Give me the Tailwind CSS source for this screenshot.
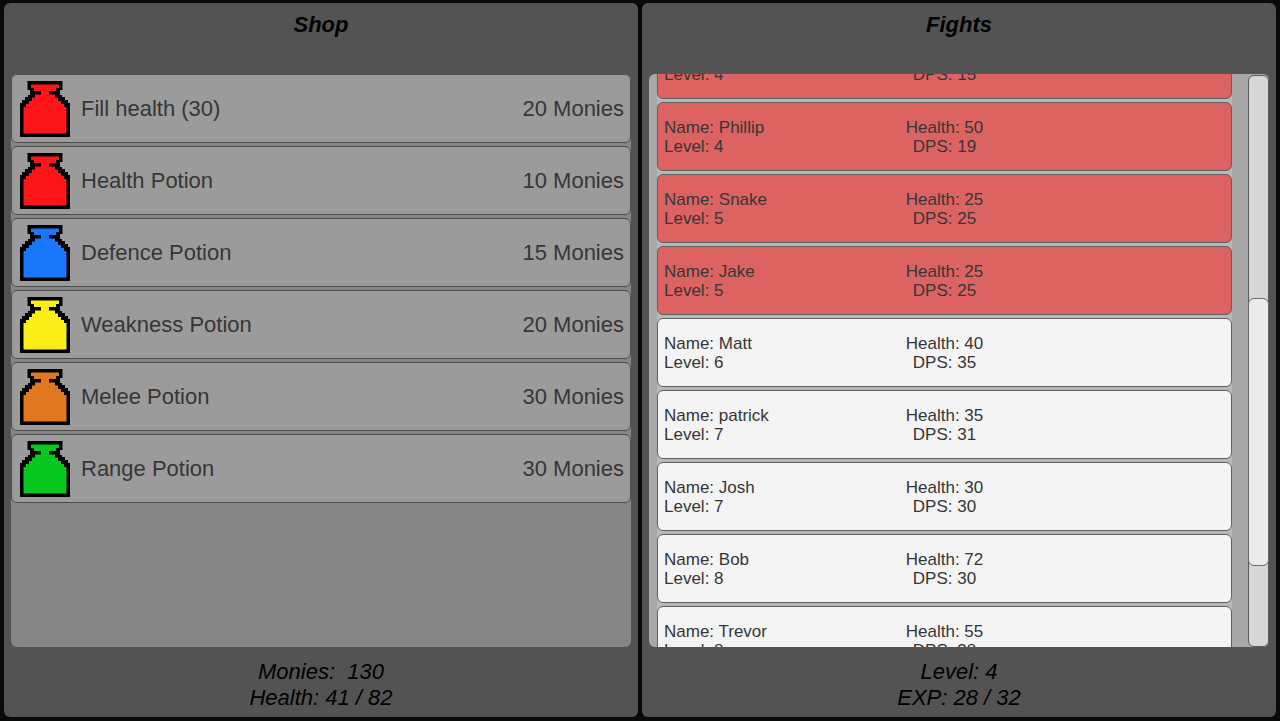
<!DOCTYPE html>
<html lang="en">
<head>
  <meta charset="UTF-8" />
  <meta name="viewport" content="width=device-width, initial-scale=1.0"/>
  <title>Shop & Fights</title>
  <script src="https://cdn.jsdelivr.net/npm/@tailwindcss/browser@4"></script>
</head>
<body class="h-screen bg-[#080b09] font-['Liberation_Sans',Arial,sans-serif] text-[#363636]">
  <!-- Potion bottle, filled with the current text colour -->
  <svg class="hidden">
    <symbol id="potion" viewBox="0 0 50 56">
      <path fill="#000" d="M7.5 0H42.5V9H40V14H42V16H45V19H48V22H50V56H0V22H2V19H5V16H8V14H10V9H7.5Z"/>
      <path fill="currentColor" d="M11 3.5H39V7H36V10H29V13.5H35V16.5H38V20H41V23H44V26H46.5V52.5H3.5V26H6V23H9V20H12V16.5H15V13.5H21V10H14V7H11Z"/>
    </symbol>
  </svg>

  <div class="h-full flex gap-1 px-1 pt-[3px] pb-1">
    <!-- Shop -->
    <section class="flex-1 min-w-0 flex flex-col rounded-md bg-[#535353] px-[7px]">
      <h2 class="h-[71px] shrink-0 pt-2 text-center text-[22px] leading-7 font-bold italic text-black">Shop</h2>
      <div id="shop-list" class="flex-1 min-h-0 overflow-hidden flex flex-col gap-[3px] rounded-md bg-[#868686]"></div>
      <div class="h-[70px] shrink-0 pt-3 text-center text-[22px] leading-[26px] italic text-black">
        <p class="whitespace-pre">Monies:  130</p>
        <p>Health: 41 / 82</p>
      </div>
    </section>

    <!-- Fights -->
    <section class="flex-1 min-w-0 flex flex-col rounded-md bg-[#535353] px-[7px]">
      <h2 class="h-[71px] shrink-0 pt-2 text-center text-[22px] leading-7 font-bold italic text-black">Fights</h2>
      <div class="flex-1 min-h-0 flex gap-4 rounded-md bg-[#a8a8a8] pl-2">
        <div class="flex-1 min-w-0 overflow-hidden bg-[#b8b8b8]">
          <div id="fight-list" class="-mt-11 flex flex-col gap-[3px]"></div>
        </div>
        <!-- Scrollbar -->
        <div class="relative w-[21px] mt-px rounded-md border border-[#5a5a5a] bg-[#d6d6d6]">
          <div class="absolute -inset-x-px top-[39%] h-[47%] rounded-md border border-[#6a6a6a] bg-[#ebebeb]"></div>
        </div>
      </div>
      <div class="h-[70px] shrink-0 pt-3 text-center text-[22px] leading-[26px] italic text-black">
        <p>Level: 4</p>
        <p>EXP: 28 / 32</p>
      </div>
    </section>
  </div>

  <script>
    const items = [
      { name: "Fill health (30)", price: 20, color: "text-[#fd1619]" },
      { name: "Health Potion", price: 10, color: "text-[#fd1619]" },
      { name: "Defence Potion", price: 15, color: "text-[#1877fb]" },
      { name: "Weakness Potion", price: 20, color: "text-[#fbee16]" },
      { name: "Melee Potion", price: 30, color: "text-[#e07820]" },
      { name: "Range Potion", price: 30, color: "text-[#06c81e]" }
    ];

    const fights = [
      { name: "Carl", level: 4, health: 40, dps: 15, done: true },
      { name: "Phillip", level: 4, health: 50, dps: 19, done: true },
      { name: "Snake", level: 5, health: 25, dps: 25, done: true },
      { name: "Jake", level: 5, health: 25, dps: 25, done: true },
      { name: "Matt", level: 6, health: 40, dps: 35 },
      { name: "patrick", level: 7, health: 35, dps: 31 },
      { name: "Josh", level: 7, health: 30, dps: 30 },
      { name: "Bob", level: 8, health: 72, dps: 30 },
      { name: "Trevor", level: 8, health: 55, dps: 38 }
    ];

    document.getElementById("shop-list").innerHTML = items.map(item => `
      <button class="h-[69px] shrink-0 flex items-center rounded-md border border-[#4c4c4c] bg-[#9b9b9b] pl-2 pr-1.5 text-[22px]">
        <svg class="w-[50px] h-14 mr-[11px] ${item.color}"><use href="#potion"/></svg>
        <span>${item.name}</span>
        <span class="ml-auto">${item.price} Monies</span>
      </button>`).join("");

    document.getElementById("fight-list").innerHTML = fights.map(fight => `
      <button class="h-[69px] shrink-0 grid grid-cols-3 items-center rounded-md border border-[#606060] px-1.5 text-[17px] leading-[19px] ${fight.done ? "bg-[#dd6262]" : "bg-[#f4f4f4]"}">
        <span class="text-left">Name: ${fight.name}<br>Level: ${fight.level}</span>
        <span>Health: ${fight.health}<br>DPS: ${fight.dps}</span>
      </button>`).join("");
  </script>
</body>
</html>
